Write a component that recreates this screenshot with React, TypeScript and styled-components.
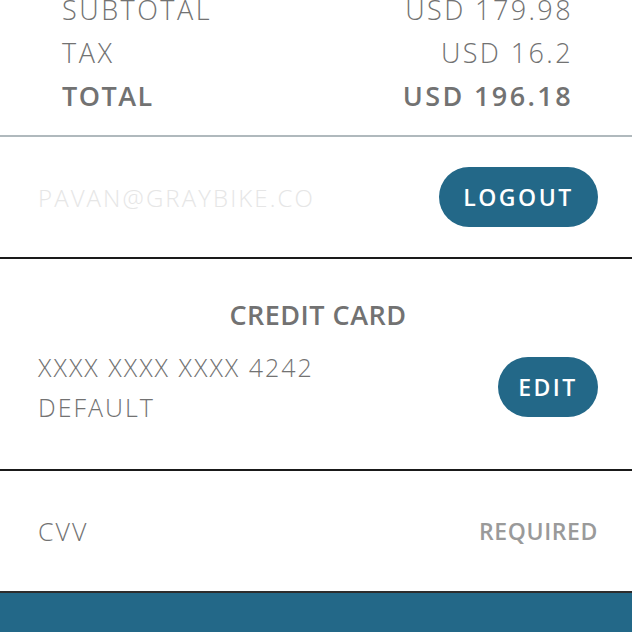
import React from "react";
import styled, { createGlobalStyle } from "styled-components";

const GlobalStyle = createGlobalStyle`
  html, body {
    margin: 0;
    padding: 0;
    background: #ffffff;
    overflow: hidden;
  }
  body {
    font-family: "Open Sans", "Noto Sans", sans-serif;
  }
  * { box-sizing: border-box; }
`;

const Page = styled.div`
  display: flex;
  flex-direction: column;
  margin-top: -40px;
  width: 632px;
`;

const Summary = styled.section`
  display: flex;
  flex-direction: column;
  padding: 28px 61px 18px 62px;
  border-bottom: 2px solid #b0b9bd;
`;

const SummaryRow = styled.div<{ $bold?: boolean }>`
  display: flex;
  justify-content: space-between;
  align-items: center;
  height: 43px;
  font-size: 27px;
  line-height: 43px;
  color: #727272;
  font-weight: ${(p) => (p.$bold ? 600 : 300)};
`;

const SummaryLabel = styled.span<{ $bold?: boolean }>`
  letter-spacing: ${(p) => (p.$bold ? 1.5 : 2.5)}px;
`;

const SummaryValue = styled.span`
  letter-spacing: 2.4px;
  margin-right: -2px;
`;

const Section = styled.section<{ $line: string; $height?: number }>`
  display: flex;
  align-items: center;
  justify-content: space-between;
  padding: 0 34px 0 38px;
  ${(p) => (p.$height ? `height: ${p.$height}px;` : "")}
  border-bottom: 2px solid ${(p) => p.$line};
`;

const Email = styled.span`
  font-size: 24px;
  font-weight: 300;
  letter-spacing: 2.1px;
  color: #e6e6e6;
`;

const PillButton = styled.button<{ $width: number }>`
  width: ${(p) => p.$width}px;
  height: 60px;
  border: none;
  border-radius: 30px;
  background: #236888;
  color: #ffffff;
  font-family: "Open Sans", "Noto Sans", sans-serif;
  font-size: 23px;
  font-weight: 600;
  letter-spacing: 2.5px;
  padding: 0;
  display: flex;
  align-items: center;
  justify-content: center;
  cursor: pointer;
`;

const CardSection = styled.section`
  display: flex;
  flex-direction: column;
  padding: 37px 34px 42px 38px;
  border-bottom: 2px solid #1a1a1a;
`;

const CardTitle = styled.h2`
  margin: 0 0 14px;
  text-align: center;
  font-size: 27px;
  font-weight: 600;
  letter-spacing: 0.5px;
  color: #727272;
  line-height: 37px;
`;

const CardRow = styled.div`
  display: flex;
  align-items: center;
  justify-content: space-between;
`;

const CardInfo = styled.div`
  display: flex;
  flex-direction: column;
`;

const LightText = styled.span`
  font-size: 25px;
  font-weight: 300;
  letter-spacing: 2px;
  line-height: 40px;
  color: #727272;
`;

const Required = styled.span`
  font-size: 23px;
  font-weight: 600;
  color: #9a9a9a;
  letter-spacing: 0.6px;
`;

const Footer = styled.footer`
  height: 60px;
  background: #236888;
`;

export default function App() {
  return (
    <>
      <GlobalStyle />
      <Page>
        <Summary>
          <SummaryRow>
            <SummaryLabel>SUBTOTAL</SummaryLabel>
            <SummaryValue>USD 179.98</SummaryValue>
          </SummaryRow>
          <SummaryRow>
            <SummaryLabel>TAX</SummaryLabel>
            <SummaryValue>USD 16.2</SummaryValue>
          </SummaryRow>
          <SummaryRow $bold>
            <SummaryLabel $bold>TOTAL</SummaryLabel>
            <SummaryValue>USD 196.18</SummaryValue>
          </SummaryRow>
        </Summary>
        <Section $line="#1a1a1a" $height={122}>
          <Email>PAVAN@GRAYBIKE.CO</Email>
          <PillButton $width={159}>LOGOUT</PillButton>
        </Section>
        <CardSection>
          <CardTitle>CREDIT CARD</CardTitle>
          <CardRow>
            <CardInfo>
              <LightText>XXXX XXXX XXXX 4242</LightText>
              <LightText>DEFAULT</LightText>
            </CardInfo>
            <PillButton $width={100}>EDIT</PillButton>
          </CardRow>
        </CardSection>
        <Section $line="#2d2d2d" $height={122}>
          <LightText>CVV</LightText>
          <Required>REQUIRED</Required>
        </Section>
        <Footer />
      </Page>
    </>
  );
}
